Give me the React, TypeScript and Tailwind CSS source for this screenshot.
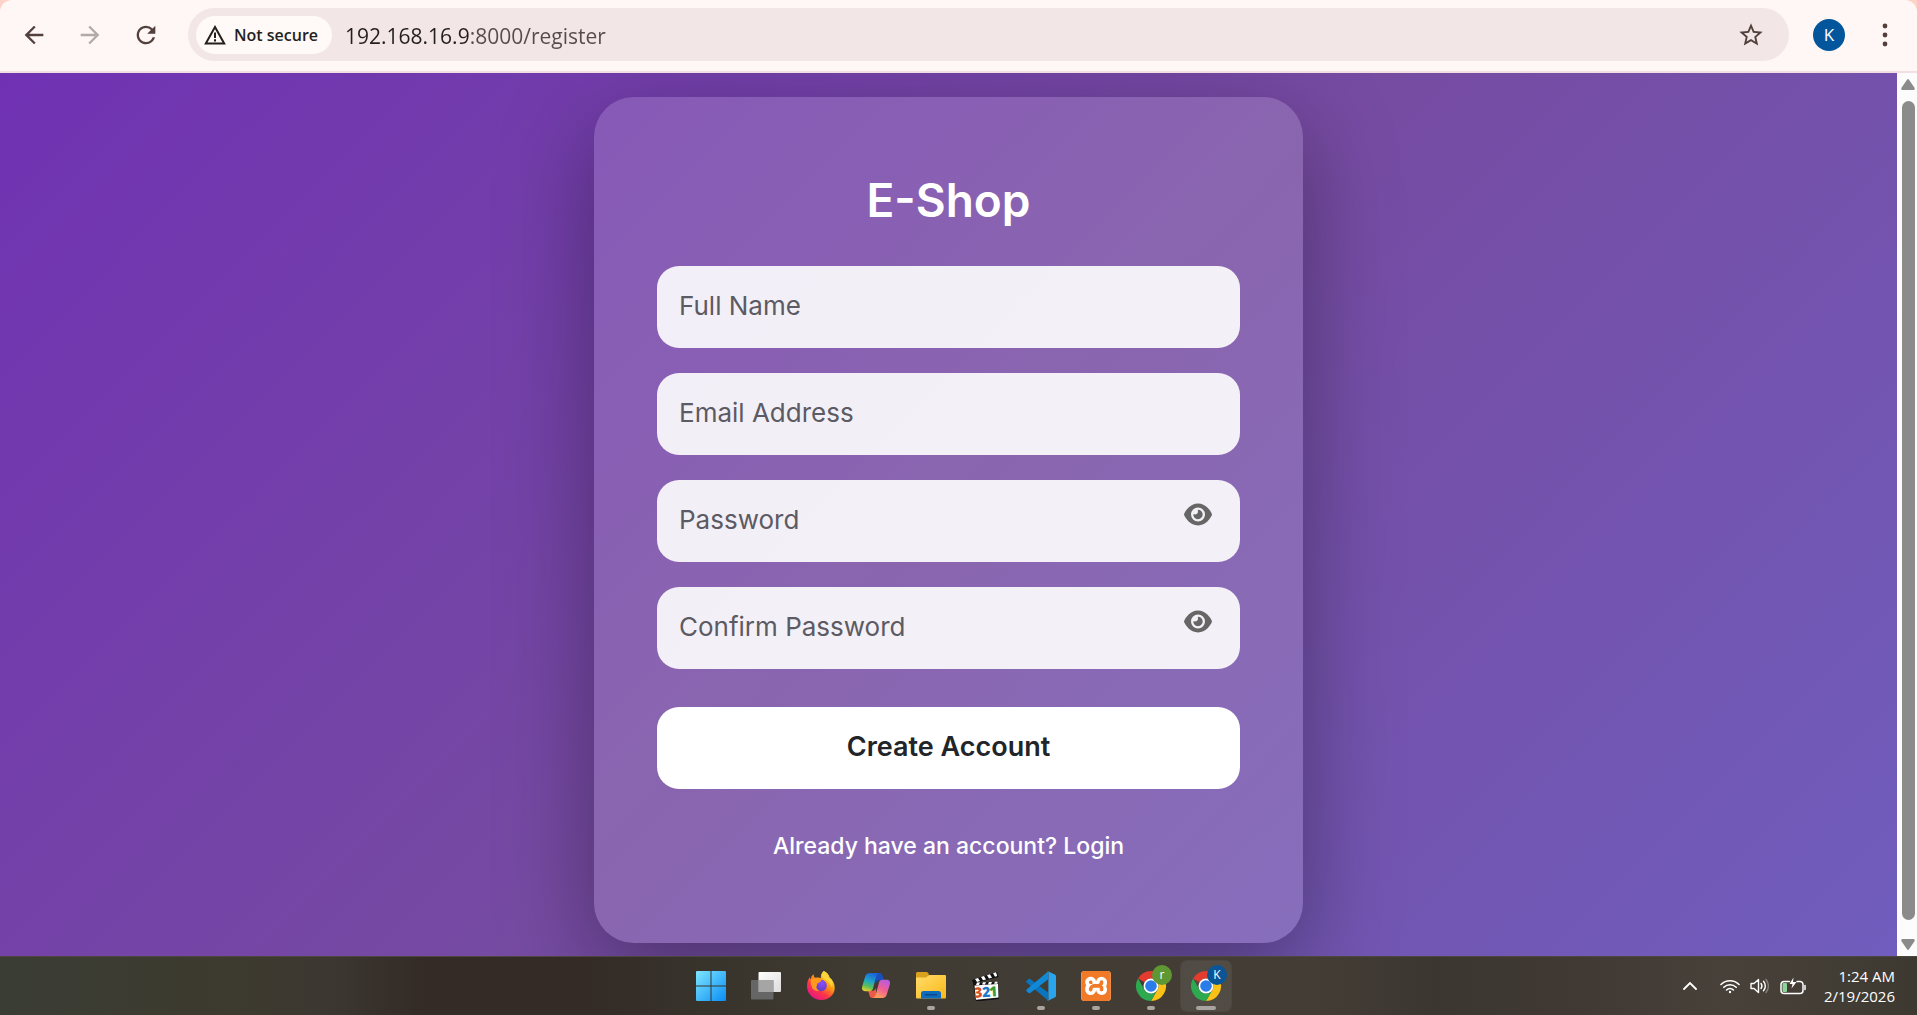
import React from 'react';
import { FaEye } from 'react-icons/fa6';
import { MdArrowBack, MdArrowForward, MdRefresh, MdStarOutline } from 'react-icons/md';
import { SiXampp } from 'react-icons/si';

interface FieldProps {
  id: string;
  type: string;
  placeholder: string;
  toggle?: boolean;
}

const Field: React.FC<FieldProps> = ({ id, type, placeholder, toggle }) => (
  <div className="relative">
    <input
      id={id}
      type={type}
      aria-label={placeholder}
      placeholder={placeholder}
      className="block h-[82px] w-full rounded-[22px] bg-white/90 px-[22px] pb-1 text-[26px] text-[#212529] outline-none placeholder:text-[#5c5a63]"
    />
    {toggle && (
      <button type="button" aria-label="Show password" className="absolute right-7 top-[22px] text-[#666666]">
        <FaEye className="h-[25px] w-7" />
      </button>
    )}
  </div>
);

const WindowsIcon = () => (
  <svg viewBox="0 0 30 30" className="size-[30px]">
    <defs>
      <linearGradient id="win" x1="0" y1="0" x2="1" y2="1">
        <stop offset="0" stopColor="#7fe6fd" />
        <stop offset="1" stopColor="#0a8ef5" />
      </linearGradient>
    </defs>
    <path fill="url(#win)" d="M1 0h13.500v14.500H0V1a1 1 0 0 1 1-1zM15.500 0H29a1 1 0 0 1 1 1v13.500H15.500zM0 15.500h14.500V30H1a1 1 0 0 1-1-1zM15.500 15.500H30V29a1 1 0 0 1-1 1H15.500z" />
  </svg>
);

const TaskViewIcon = () => (
  <svg viewBox="0 0 30 30" className="size-[30px]">
    <defs>
      <linearGradient id="tv" x1="0" y1="0" x2="1" y2="1">
        <stop offset="0" stopColor="#ffffff" />
        <stop offset="1" stopColor="#dcdcdc" />
      </linearGradient>
    </defs>
    <rect x="7.500" y="1" width="22.500" height="20" rx="1" fill="url(#tv)" />
    <rect x="0" y="9" width="22.500" height="19.500" rx="1" fill="#77777a" fillOpacity=".75" />
    <path d="M7.500 9h15v12h-15z" fill="#a5a5a5" />
  </svg>
);

const FirefoxIcon = () => (
  <svg viewBox="0 0 30 30" className="size-[30px]">
    <defs>
      <linearGradient id="ff1" x1=".8" y1=".1" x2=".2" y2=".95">
        <stop offset="0" stopColor="#fff44f" />
        <stop offset=".35" stopColor="#ff980e" />
        <stop offset=".65" stopColor="#ff3647" />
        <stop offset="1" stopColor="#e31587" />
      </linearGradient>
      <radialGradient id="ff2" cx=".6" cy=".3" r=".8">
        <stop offset="0" stopColor="#8a4dff" />
        <stop offset="1" stopColor="#5b3bb8" />
      </radialGradient>
    </defs>
    <path fill="url(#ff1)" d="M17.800 0c3 1.300 5.200 4 5.800 6.700 1.200.6 2 1.500 2.500 2.400 2 3 2.900 6 2.500 9.500C27.800 25 22 29 15.500 29 7.500 29 1 23 1 15.200c0-3.200.8-6.500 2.700-9 .2 1 .5 1.500.9 2C5 6 6 4.500 7.600 3.300c0 1.500.5 2.700 1.400 3.500 2.300-.7 4.500-.4 6 .2C14.400 4.500 15.500 1.800 17.800 0z" />
    <circle cx="15" cy="14.500" r="5.800" fill="url(#ff2)" />
    <path fill="#ff9a1f" d="M4.700 8.200c2-1.300 5-1.300 7.300.3l3.300.6c.2 1.600-1.600 2.300-3 2.800-1.500.5-1 2.400-1.700 3.200-.7 2.400 1.200 4.400 3.400 4.500-4 1.500-8-1-8.500-5-.5 1-.8-3.500-.8-6.400z" />
    <path fill="#ffd43a" d="M17.800 0c3 1.300 5.200 4 5.800 6.700 2.500 2.300 3.400 6 2 9.500-.8-4-3-6.200-6-7.200-2.400-1-5.600-4.500-1.800-9z" />
  </svg>
);

const CopilotIcon = () => (
  <svg viewBox="0 0 30 30" className="size-[30px]">
    <defs>
      <linearGradient id="cp1" x1=".6" y1="0" x2=".3" y2="1">
        <stop offset="0" stopColor="#1c63d8" />
        <stop offset=".45" stopColor="#1ea5c9" />
        <stop offset=".75" stopColor="#5cbf5a" />
        <stop offset="1" stopColor="#e5cf2f" />
      </linearGradient>
      <linearGradient id="cp2" x1=".8" y1="0" x2=".3" y2="1">
        <stop offset="0" stopColor="#b45be8" />
        <stop offset=".5" stopColor="#ee5f96" />
        <stop offset="1" stopColor="#ffa257" />
      </linearGradient>
    </defs>
    <path fill="#1a4fc0" d="M14 2h4.500c1.700 0 2.600 1 3 2.500L22.800 9H19c-2 0-3 1-3.600 3z" />
    <path fill="#ee5a4a" d="M16 27h-4.500c-1.700 0-2.600-1-3-2.500L7.200 20H11c2 0 3-1 3.600-3z" />
    <path fill="url(#cp1)" d="M8.500 2H18c-1.500.3-2.300 1.700-2.800 3.500L12 17.500c-.5 1.800-1.700 2.700-3.500 2.700H4.200C1.500 20.200.5 18 1.200 15.500l3-10C4.800 3.300 6.300 2 8.500 2z" />
    <path fill="url(#cp2)" d="M21.500 27H12c1.500-.3 2.300-1.700 2.800-3.500L18 11.500c.5-1.800 1.700-2.700 3.500-2.700h4.300c2.700 0 3.700 2.200 3 4.700l-3 10c-.6 2.200-2.100 3.500-4.300 3.500z" />
  </svg>
);

const ExplorerIcon = () => (
  <svg viewBox="0 0 30 30" className="size-[30px]">
    <defs>
      <linearGradient id="ex" x1="0" y1="0" x2="1" y2="1">
        <stop offset="0" stopColor="#ffdc6b" />
        <stop offset="1" stopColor="#fbb917" />
      </linearGradient>
    </defs>
    <path fill="#d9a11c" d="M1.500 1H11l2 2-1.500 4H0V2.500C0 1.700.7 1 1.500 1z" />
    <path fill="url(#ex)" d="M0 6.500h10L13 4h16a1 1 0 0 1 1 1v21.500a1 1 0 0 1-1 1H1a1 1 0 0 1-1-1z" />
    <path fill="#0f6cbd" d="M7.500 20h15a2.500 2.500 0 0 1 2.500 2.500v5H5v-5A2.500 2.500 0 0 1 7.500 20z" />
    <path fill="#0a4a86" d="M9 23h12v1.500H9z" />
  </svg>
);

const PlayerIcon = () => (
  <svg viewBox="0 0 30 30" className="size-[30px]">
    <path fill="#111" d="M1 9 26 1l1.500 5L4 12l23-1 1 17-23 2.500L2 12z" />
    <path fill="#fff" d="m4 8 3-1 2 3-3 1zM10 6l3-1 2 3.500-3 .8zM16 4.200l3-1 2 3.500-3 .8zM22 2.300l3-1 1.200 3.800-2.200.6zM6 11.500h3l-1 2.500H5zM12 11.200h3l-1 2.300h-3zM18 11h3l-1 2.200h-3zM24 10.700h2.500v2.100H23zM3.500 14.500 27 13l.5 13.500L5 28.800z" />
    <g fontFamily="Open Sans, sans-serif" fontWeight="800" fontSize="14" transform="rotate(-4 15 20)">
      <text x="3" y="26" fill="#d4511d">3</text>
      <text x="11" y="26" fill="#2277c8">2</text>
      <text x="18" y="26" fill="#3d9a38">1</text>
    </g>
  </svg>
);

const VsCodeIcon = () => (
  <svg viewBox="0 0 30 30" className="size-[30px]">
    <path fill="#0a75bd" d="M.6 9.800 2.500 8.100c.5-.5 1.200-.5 1.700-.1L22 21.500v8L.6 11.500c-.6-.5-.6-1.200 0-1.700z" />
    <path fill="#1289d6" d="M.6 20.200 2.500 21.900c.5.5 1.200.5 1.700.1L22 8.500v-8L.6 18.500c-.6.5-.6 1.200 0 1.700z" />
    <path fill="#2ba4ee" d="M22 .3 28.700 3.500c.8.400 1.300 1.100 1.300 2v19c0 .9-.5 1.600-1.300 2L22 29.700c-.8.400-1.300.2-1.800-.3.900.8 2.200.2 2.200-1V1.600c0-1.200-1.300-1.800-2.200-1 .5-.5 1.100-.7 1.800-.3z" />
  </svg>
);

const XamppIcon = () => (
  <span className="block rounded-[4px] bg-white">
    <SiXampp className="size-[30px] text-[#f07a28]" />
  </span>
);

interface ChromeIconProps {
  letter: string;
  color: string;
}

const ChromeIcon: React.FC<ChromeIconProps> = ({ letter, color }) => (
  <svg viewBox="0 0 30 30" className="size-[30px] overflow-visible">
    <path fill="#e33b2e" d="M15 0a15 15 0 0 1 13 7.500H15a7.500 7.500 0 0 0-6.500 3.750L2 7.500A15 15 0 0 1 15 0z" />
    <path fill="#fbc116" d="M28 7.500A15 15 0 0 1 15 30l6.500-11.250A7.500 7.500 0 0 0 15 7.500z" />
    <path fill="#2da94f" d="M2 7.500A15 15 0 0 0 15 30l6.500-11.250a7.500 7.500 0 0 1-13 0z" />
    <circle cx="15" cy="15" r="7.500" fill="#fff" />
    <circle cx="15" cy="15" r="5.800" fill="#2a7de9" />
    <circle cx="26" cy="4" r="10" fill={color} />
    <text x="26" y="8" textAnchor="middle" fontSize="12" fill="#fff" fontFamily="Open Sans, sans-serif">{letter}</text>
  </svg>
);

interface TaskbarApp {
  name: string;
  icon: React.ReactNode;
  state?: 'open' | 'active';
}

const apps: TaskbarApp[] = [
  { name: 'Start', icon: <WindowsIcon /> },
  { name: 'Task View', icon: <TaskViewIcon /> },
  { name: 'Firefox', icon: <FirefoxIcon /> },
  { name: 'Copilot', icon: <CopilotIcon /> },
  { name: 'File Explorer', icon: <ExplorerIcon />, state: 'open' },
  { name: 'Media Player Classic', icon: <PlayerIcon /> },
  { name: 'Visual Studio Code', icon: <VsCodeIcon />, state: 'open' },
  { name: 'XAMPP', icon: <XamppIcon />, state: 'open' },
  { name: 'Chrome', icon: <ChromeIcon letter="r" color="#5f9832" />, state: 'open' },
  { name: 'Chrome (K)', icon: <ChromeIcon letter="K" color="#0a5596" />, state: 'active' },
];

const BrowserToolbar = () => (
  <header className="bg-[#fcd3c6]">
    <div className="flex h-[73px] items-center rounded-t-xl border-b-2 border-[#f1dfe4] bg-[#fff7f5] pb-0.5 pl-5 pr-7 text-[#51403c]">
      <nav className="flex items-center gap-7">
        <button type="button" aria-label="Back"><MdArrowBack className="size-7" /></button>
        <button type="button" aria-label="Forward" className="text-[#b3a9a6]"><MdArrowForward className="size-7" /></button>
        <button type="button" aria-label="Reload"><MdRefresh className="size-7" /></button>
      </nav>
      <div className="ml-7 mr-6 flex h-[53px] flex-1 items-center rounded-full bg-[#f2e7e6] pl-2 pr-6">
        <button type="button" className="flex h-[38px] items-center gap-2 rounded-full bg-[#fff9f7] pl-2 pr-3.5 text-[16px] font-semibold text-[#241f1e]">
          <svg viewBox="0 0 22 20" className="h-5 w-[22px]" fill="none" stroke="currentColor" strokeWidth="2">
            <path d="M11 2 20.200 18.500H1.800z" />
            <path d="M11 7.500v5.500M11 14.200v2.200" />
          </svg>
          Not secure
        </button>
        {/* host part is darker than the port and path */}
        <input
          type="text"
          aria-label="Address"
          defaultValue="192.168.16.9:8000/register"
          className="ml-[13px] h-9 min-w-0 flex-1 bg-[linear-gradient(90deg,#241f1e_124px,#544b4a_124px)] bg-clip-text pt-0.5 text-[21px] text-transparent outline-none"
        />
        <button type="button" aria-label="Bookmark this tab"><MdStarOutline className="size-7" /></button>
      </div>
      <button type="button" className="size-8 rounded-full bg-[#03569c] text-[17px] text-white">K</button>
      <button type="button" aria-label="Menu" className="ml-9">
        <svg viewBox="0 0 8 24" className="h-6 w-2" fill="currentColor">
          <circle cx="4" cy="3" r="2.400" />
          <circle cx="4" cy="12" r="2.400" />
          <circle cx="4" cy="21" r="2.400" />
        </svg>
      </button>
    </div>
  </header>
);

const Scrollbar = () => (
  <div className="flex w-5 flex-col items-center gap-[11px] bg-[#fdfcfd] py-1.5 pl-0.5 text-[#8b8b8b]">
    <svg viewBox="0 0 14 11" className="h-[11px] w-3.5" fill="currentColor">
      <path d="M6 .8a1.200 1.200 0 0 1 2 0l5.500 8c.6 1 0 2.200-1 2.200h-11c-1 0-1.600-1.200-1-2.200z" />
    </svg>
    <div className="w-[13px] flex-1 rounded-full bg-[#8b8b8b]" />
    <svg viewBox="0 0 14 11" className="mt-2 h-[11px] w-3.5" fill="currentColor">
      <path d="M6 10.200a1.200 1.200 0 0 0 2 0l5.500-8C14.100 1.200 13.500 0 12.500 0h-11C.5 0-.1 1.200.5 2.200z" />
    </svg>
  </div>
);

const RegisterCard = () => (
  <section className="w-full max-w-[709px] rounded-[40px] bg-white/15 p-[63px] shadow-[0_30px_94px_rgba(0,0,0,0.35)]">
    <h1 className="mb-[26px] text-center text-[46px] font-semibold leading-[80px] text-white">E-Shop</h1>
    <form>
      <div className="flex flex-col gap-[25px]">
        <Field id="name" type="text" placeholder="Full Name" />
        <Field id="email" type="email" placeholder="Email Address" />
        <Field id="password" type="password" placeholder="Password" toggle />
        <Field id="confirm" type="password" placeholder="Confirm Password" toggle />
      </div>
      <button type="button" className="mt-[38px] h-[82px] w-full rounded-[22px] bg-white pb-0.5 text-[27px] font-semibold text-[#212529]">
        Create Account
      </button>
    </form>
    <p className="pb-[11px] pt-9 text-center text-[23px] font-medium leading-[42px] text-white">
      <a href="#login">Already have an account? Login</a>
    </p>
  </section>
);

const Taskbar = () => (
  <footer className="relative z-10 grid h-[59px] grid-cols-[1fr_auto_1fr] items-center border-t border-[#4d4740] bg-[linear-gradient(90deg,#3a3d34,#3d3a2f_12%,#3c3831_17%,#342b26_22%,#342b26_31%,#37332b_36%,#3f3b33_45%,#443d36_68%,#3b3730_75%,#423a34_84%,#48413a_90%,#3d3931)]">
    <div />
    <ul className="flex gap-[5px]">
      {apps.map((app) => (
        <li key={app.name}>
          <button
            type="button"
            aria-label={app.name}
            className={`relative flex h-[50px] w-[50px] items-center justify-center rounded-md ${app.state === 'active' ? 'bg-white/8 ring-1 ring-white/5' : ''}`}
          >
            {app.icon}
            {app.state && (
              <span className={`absolute bottom-px h-1 rounded-full bg-[#a9a49f] ${app.state === 'active' ? 'w-5' : 'w-2'}`} />
            )}
          </button>
        </li>
      ))}
    </ul>
    <div className="flex items-center justify-end pr-[22px] text-white">
      <svg viewBox="0 0 14 8" className="mr-[23px] h-2 w-3.5" fill="none" stroke="currentColor" strokeWidth="1.800" strokeLinecap="round">
        <path d="m1 7 6-6 6 6" />
      </svg>
      <svg viewBox="0 0 20 15" className="mr-2.5 h-[15px] w-5" fill="none" stroke="currentColor" strokeWidth="1.600" strokeLinecap="round">
        <path d="M1 5.500a12.800 12.800 0 0 1 18 0M3.800 8.300a8.800 8.800 0 0 1 12.400 0M6.600 11a4.900 4.900 0 0 1 6.800 0" />
        <circle cx="10" cy="13" r="1.200" fill="currentColor" stroke="none" />
      </svg>
      <svg viewBox="0 0 20 16" className="mr-2.5 h-4 w-5" fill="none" stroke="currentColor" strokeWidth="1.400" strokeLinecap="round" strokeLinejoin="round">
        <path d="M1 5.500h3L8.500 1.500v13L4 10.500H1z" />
        <path d="M11 5.500a4 4 0 0 1 0 5M13.500 3.300a7 7 0 0 1 0 9.400" />
        <path d="M16 1.500a10 10 0 0 1 0 13" opacity=".35" />
      </svg>
      <svg viewBox="0 0 26 18" className="mr-[18px] h-[18px] w-[26px]" fill="none" stroke="currentColor" strokeWidth="1.500" strokeLinecap="round">
        <rect x="2.500" y="6" width="4.500" height="9" rx="1" fill="#8ed39a" stroke="none" />
        <path d="M9.500 4.500H4a3 3 0 0 0-3 3v6a3 3 0 0 0 3 3h16a3 3 0 0 0 3-3v-6a3 3 0 0 0-3-3h-3M25 8.500v4" />
        <path d="M13.500.5 9.500 7h3l-1 4.500 5-6.500h-3.500z" fill="currentColor" stroke="none" />
      </svg>
      <div className="text-right text-[15px] leading-5">
        <div>1:24 AM</div>
        <div>2/19/2026</div>
      </div>
    </div>
  </footer>
);

const App = () => (
  <div className="flex min-h-screen flex-col font-['Open_Sans','Noto_Sans',sans-serif]">
    <BrowserToolbar />
    <div className="flex flex-1">
      <main className="flex flex-1 justify-center overflow-hidden bg-[linear-gradient(135deg,#7032b3,#764ba2_50%,#705dbd)] px-6 pb-[13px] pt-6 font-['Inter',sans-serif]">
        <RegisterCard />
      </main>
      <Scrollbar />
    </div>
    <Taskbar />
  </div>
);

export default App;
